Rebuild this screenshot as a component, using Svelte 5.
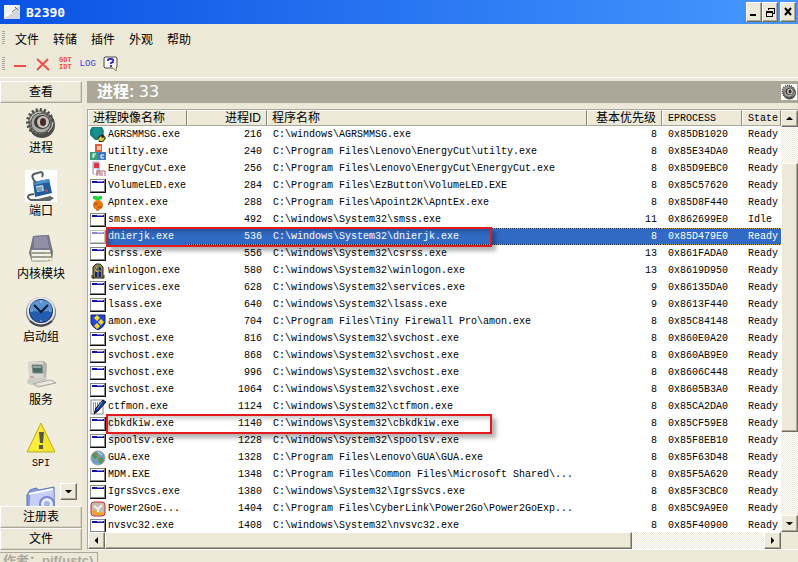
<script>
	const menus = ['文件', '转储', '插件', '外观', '帮助']

	const sideitems = [
		{ icon: 'gear', label: '进程' },
		{ icon: 'port', label: '端口' },
		{ icon: 'kernel', label: '内核模块' },
		{ icon: 'clock', label: '启动组' },
		{ icon: 'pc', label: '服务' },
		{ icon: 'warn', label: 'SPI' },
		{ icon: 'folder', label: '' }
	]

	// icon, name, pid, path, priority, eprocess, state
	const processes = [
		['phone', 'AGRSMMSG.exe', 216, 'C:\\windows\\AGRSMMSG.exe', 8, '0x85DB1020', 'Ready'],
		['blocks', 'utilty.exe', 240, 'C:\\Program Files\\Lenovo\\EnergyCut\\utilty.exe', 8, '0x85E34DA0', 'Ready'],
		['energy', 'EnergyCut.exe', 256, 'C:\\Program Files\\Lenovo\\EnergyCut\\EnergyCut.exe', 8, '0x85D9EBC0', 'Ready'],
		['win', 'VolumeLED.exe', 284, 'C:\\Program Files\\EzButton\\VolumeLED.EXE', 8, '0x85C57620', 'Ready'],
		['carrot', 'Apntex.exe', 288, 'C:\\Program Files\\Apoint2K\\ApntEx.exe', 8, '0x85D8F440', 'Ready'],
		['win', 'smss.exe', 492, 'C:\\windows\\System32\\smss.exe', 11, '0x862699E0', 'Idle'],
		['win', 'dnierjk.exe', 536, 'C:\\windows\\System32\\dnierjk.exe', 8, '0x85D479E0', 'Ready'],
		['win', 'csrss.exe', 556, 'C:\\windows\\System32\\csrss.exe', 13, '0x861FADA0', 'Ready'],
		['logon', 'winlogon.exe', 580, 'C:\\windows\\System32\\winlogon.exe', 13, '0x8619D950', 'Ready'],
		['win', 'services.exe', 628, 'C:\\windows\\System32\\services.exe', 9, '0x86135DA0', 'Ready'],
		['win', 'lsass.exe', 640, 'C:\\windows\\System32\\lsass.exe', 9, '0x8613F440', 'Ready'],
		['shield', 'amon.exe', 704, 'C:\\Program Files\\Tiny Firewall Pro\\amon.exe', 8, '0x85C84148', 'Ready'],
		['win', 'svchost.exe', 816, 'C:\\windows\\System32\\svchost.exe', 8, '0x860E0A20', 'Ready'],
		['win', 'svchost.exe', 868, 'C:\\windows\\System32\\svchost.exe', 8, '0x860AB9E0', 'Ready'],
		['win', 'svchost.exe', 996, 'C:\\windows\\System32\\svchost.exe', 8, '0x8606C448', 'Ready'],
		['win', 'svchost.exe', 1064, 'C:\\windows\\System32\\svchost.exe', 8, '0x8605B3A0', 'Ready'],
		['pen', 'ctfmon.exe', 1124, 'C:\\windows\\System32\\ctfmon.exe', 8, '0x85CA2DA0', 'Ready'],
		['win', 'cbkdkiw.exe', 1140, 'C:\\windows\\System32\\cbkdkiw.exe', 8, '0x85CF59E8', 'Ready'],
		['win', 'spoolsv.exe', 1228, 'C:\\windows\\System32\\spoolsv.exe', 8, '0x85F8EB10', 'Ready'],
		['globe', 'GUA.exe', 1328, 'C:\\Program Files\\Lenovo\\GUA\\GUA.exe', 8, '0x85F63D48', 'Ready'],
		['win', 'MDM.EXE', 1348, 'C:\\Program Files\\Common Files\\Microsoft Shared\\...', 8, '0x85F5A620', 'Ready'],
		['win', 'IgrsSvcs.exe', 1380, 'C:\\windows\\System32\\IgrsSvcs.exe', 8, '0x85F3CBC0', 'Ready'],
		['power', 'Power2GoE...', 1404, 'C:\\Program Files\\CyberLink\\Power2Go\\Power2GoExp...', 8, '0x85C9A9E0', 'Ready'],
		['win', 'nvsvc32.exe', 1408, 'C:\\windows\\System32\\nvsvc32.exe', 8, '0x85F40900', 'Ready']
	]

	const marked = ['dnierjk.exe', 'cbkdkiw.exe']
	let selected = $state(536)
</script>

{#snippet gear()}
	<ellipse cx="17" cy="18" rx="13" ry="13" fill="#4c4c4a" />
	<ellipse cx="15" cy="15" rx="12" ry="12" fill="#85857f" stroke="#4d4d4b" stroke-width="4" stroke-dasharray="2 2" />
	<ellipse cx="16" cy="16" rx="10" ry="10" fill="#aaa9a4" stroke="#555552" />
	<ellipse cx="17" cy="15" rx="8" ry="7" fill="#393b39" />
	<ellipse cx="18" cy="15" rx="6" ry="6" fill="#c6c5c0" />
	<ellipse cx="18" cy="15" rx="3" ry="4" fill="#4b2c25" />
	<path d="M5 13Q8 5 16 5M23 25Q28 21 28 15" fill="none" stroke="#dedcd5" />
{/snippet}

{#snippet sideicon(name)}
	<svg width="32" height="32" viewBox="0 0 32 32" aria-hidden="true">
		{#if name == 'gear'}
			{@render gear()}
		{:else if name == 'port'}
			<rect width="32" height="32" fill="#fff" />
			<path d="M8 12L24 9L27 23L10 27Z" fill="#225d9b" />
			<path d="M8 12L24 9L25 12L9 15Z" fill="#4c91ca" />
			<path d="M11 16L18 15L19 21L12 22Z" fill="#b4d2df" />
			<path d="M12 18h5M12 20h5" stroke="#416a7d" />
			<rect x="20" y="19" width="3" height="3" fill="#c33b56" />
			<path d="M11 13Q5 6 9 4L16 2Q19 3 17 7M9 24L4 25Q1 28 6 30L16 30" fill="none" stroke="#53605e" stroke-width="2" />
			<path d="M13 29L25 26L29 28L25 31H14Z" fill="#5d686a" />
		{:else if name == 'kernel'}
			<path d="M8 3L24 2L28 19L27 28L7 29L4 20Z" fill="#777777" />
			<path d="M8 3L23 2L26 17L7 17Z" fill="#77778d" />
			<path d="M9 4L22 3L24 15L9 15Z" fill="#8f90a7" />
			<path d="M6 17H25L27 28L7 29Z" fill="#c9c8bc" />
			<path d="M7 18H25M7 22H26M7 26H27" stroke="#f5f3e8" stroke-width="2" />
			<path d="M7 20H25M7 24H26" stroke="#777770" />
			<path d="M21 20h2M22 24h2M23 27h2" stroke="#a6c54d" />
		{:else if name == 'clock'}
			<circle cx="16" cy="16" r="15" fill="#777c84" />
			<circle cx="16" cy="15" r="14" fill="#e5e7ea" />
			<circle cx="16" cy="15" r="12" fill="#183465" />
			<circle cx="16" cy="15" r="11" fill="#245cae" />
			<path d="M5 14Q5 4 16 4Q27 4 27 14Q16 17 5 14" fill="#5d93cf" />
			<path d="M16 4v3M16 24v2M5 15h3M24 15h3" stroke="#aecdf0" />
			<path d="M9 9L16 16L23 9" fill="none" stroke="#0b1c3c" stroke-width="2" />
			<path d="M5 25Q16 34 27 25" fill="none" stroke="#42464d" stroke-width="2" />
		{:else if name == 'pc'}
			<path d="M3 3L19 2L22 5L21 20L5 21Z" fill="#b3b2aa" />
			<path d="M3 3L18 3L19 19L4 20Z" fill="#d9d8d0" />
			<path d="M7 6H17L18 14H8Z" fill="#456f67" stroke="#828981" />
			<path d="M8 7H16V9H8Z" fill="#8aaa9f" />
			<path d="M3 20L21 18L23 23L6 26L2 24Z" fill="#cdccc4" />
			<path d="M8 25L26 21L31 24L13 28Z" fill="#d5d4ca" stroke="#a9a9a1" />
			<path d="M12 25L26 22M14 26L28 23" stroke="#f3f1e8" />
			<path d="M5 18h4" stroke="#cb796c" />
		{:else if name == 'warn'}
			<path d="M16 1L30 30H2Z" fill="#f3e52a" stroke="#bcae2b" stroke-linejoin="round" />
			<path d="M16 3L16 28H4Z" fill="#fbf348" opacity="0.6" />
			<path d="M14 10H19L18 21H15Z" fill="#5a5545" />
			<rect x="14" y="23" width="4" height="4" fill="#5a5545" />
		{:else}
			<path d="M2 10L5 5L11 3L14 5L29 2L29 32H2Z" fill="#829ae0" stroke="#5b74b5" />
			<path d="M5 9L29 4L29 32H3Z" fill="#c7cff8" stroke="#8094db" />
			<path d="M4 9L28 4" stroke="#fff" stroke-width="2" />
			<circle cx="22" cy="19" r="7" fill="#e9edff" stroke="#7387d4" stroke-width="2" />
			<circle cx="22" cy="19" r="3" fill="#a2b3ef" />
		{/if}
	</svg>
{/snippet}

{#snippet proc(name)}
	<svg width="16" height="16" viewBox="0 0 16 16" aria-hidden="true">
		{#if name == 'win'}
			<rect y="1" width="16" height="14" fill="#111" />
			<rect y="1" width="15" height="13" fill="#888" />
			<rect x="1" y="2" width="13" height="11" fill="#fff" />
			<rect x="2" y="3" width="12" height="2" fill="#1010a8" />
			<path d="M8 3v1M10 3v1M12 3v1" stroke="#fff" />
		{:else if name == 'phone'}
			<path d="M2 0H12L14 4L13 9L9 13H5L0 8V3Z" fill="#167d80" />
			<path d="M4 1H10L12 5L9 10H5L2 6Z" fill="#198f8f" />
			<path d="M8 10L13 7L16 11L13 15H9Z" fill="#222" />
			<path d="M8 12L11 9L12 11L15 10L13 14H10Z" fill="#d9ce35" />
		{:else if name == 'blocks'}
			<rect x="5" y="0" width="7" height="8" fill="#dd6135" />
			<rect x="7" y="2" width="4" height="4" fill="#f7c6a5" />
			<rect x="0" y="8" width="8" height="8" fill="#3b9b76" />
			<rect x="8" y="8" width="8" height="8" fill="#4077bd" />
			<path d="M3 14V10H6M3 12H5M14 11H11V14H14" fill="none" stroke="#fff" />
		{:else if name == 'energy'}
			<path d="M3 1H9V13H3Z" fill="#d3dae3" stroke="#a0a5b1" />
			<rect x="4" y="2" width="5" height="5" fill="#df3548" />
			<path d="M7 15V10H15V15M10 15V11M12 15V11" fill="none" stroke="#ba596a" />
			<path d="M5 8v5" stroke="#fff" stroke-width="2" />
		{:else if name == 'carrot'}
			<path d="M3 1H7L8 2L9 1H12V4L9 5H6L3 4Z" fill="#1fd836" />
			<ellipse cx="8" cy="10" rx="5" ry="5" fill="#e77717" />
			<path d="M4 9H8M8 12H12M6 15H9" stroke="#a3480b" />
		{:else if name == 'logon'}
			<path d="M3 15V4L6 1H10L13 4V15Z" fill="#8e8a45" stroke="#29290d" />
			<path d="M5 14V5L8 3L11 5V14Z" fill="#182078" />
			<path d="M8 3V14M5 8H11" stroke="#aaa653" />
			<path d="M2 12V15H4M14 12V15H12" fill="none" stroke="#222" />
			<path d="M7 4Q4 7 7 9" fill="none" stroke="#e1da74" />
		{:else if name == 'shield'}
			<path d="M1 1H15V9Q14 13 8 16Q2 13 1 9Z" fill="#2246d8" stroke="#101e60" />
			<path d="M7 1L10 4L7 7L4 4ZM11 5L14 8L11 11L8 8ZM7 9L10 12L7 15L4 12Z" fill="#f7db22" />
		{:else if name == 'pen'}
			<rect x="1" y="1" width="12" height="14" fill="#fff" stroke="#888" />
			<path d="M3 4H11M3 6H10M3 8H8M3 10H7M3 12H5" stroke="#222" stroke-dasharray="1 1" />
			<path d="M13 1L16 3L8 12L4 15L6 9Z" fill="#1438a4" stroke="#111" />
			<path d="M12 3L7 10" stroke="#67a2f2" />
		{:else if name == 'globe'}
			<circle cx="8" cy="8" r="7" fill="#719fbd" stroke="#95a2a5" />
			<path d="M2 4L6 2L8 6L5 9L3 7ZM8 8L12 7L14 10L11 14L9 12Z" fill="#48974f" />
			<path d="M4 3L13 12" stroke="#cf754a" />
			<path d="M8 2L12 5" stroke="#e9f1ee" />
		{:else}
			<rect x="1" y="1" width="14" height="14" rx="3" fill="#c3beb5" stroke="#ce2526" />
			<path d="M2 10Q6 7 8 12L13 11V14H3Z" fill="#f4a425" />
			<path d="M4 5L8 8L12 4M8 7V11" fill="none" stroke="#f3f1ea" stroke-width="2" />
		{/if}
	</svg>
{/snippet}

{#snippet arrow(dir)}
	<svg width="7" height="7" viewBox="0 0 7 7" aria-hidden="true">
		{#if dir == 'up'}<path d="M0 5h7L4 2H3z" />
		{:else if dir == 'down'}<path d="M0 2h7L4 5H3z" />
		{:else if dir == 'left'}<path d="M5 0v7L2 4V3z" />
		{:else}<path d="M2 0v7L5 4V3z" />{/if}
	</svg>
{/snippet}

<div class="window">
	<header class="titlebar">
		<svg width="16" height="14" viewBox="0 0 16 14" aria-hidden="true">
			<rect width="16" height="14" fill="#f0f1f2" />
			<path d="M0 14L16 0V14Z" fill="#d3d6da" />
			<path d="M2 11L12 4" stroke="#fff" stroke-width="2" />
			<path d="M8 7L13 3M11 2l3 3" stroke="#62676d" />
		</svg>
		<h1>B2390</h1>
		<div class="winbuttons">
			<button class="raised" aria-label="Minimize"><svg width="10" height="10" viewBox="0 0 10 10"><path d="M1 8h6" stroke="#000" stroke-width="2" /></svg></button>
			<button class="raised" aria-label="Restore"><svg width="10" height="10" viewBox="0 0 10 10" shape-rendering="crispEdges"><path d="M3 3V1H9V6H7M3 1H9M1 4H7V9H1ZM1 5H7" fill="none" stroke="#000" /></svg></button>
			<button class="raised close" aria-label="Close"><svg width="10" height="10" viewBox="0 0 10 10"><path d="M2 1L8 8M8 1L2 8" stroke="#000" stroke-width="2" /></svg></button>
		</div>
	</header>

	<nav class="menubar">
		<span class="grip"></span>
		{#each menus as m}
			<button>{m}</button>
		{/each}
	</nav>
	<div class="toolbar">
		<span class="grip"></span>
		<button aria-label="Remove"><svg width="16" height="16" viewBox="0 0 16 16"><path d="M2 10H14" stroke="#f34c42" stroke-width="2" /></svg></button>
		<button aria-label="Delete"><svg width="16" height="16" viewBox="0 0 16 16"><path d="M2 3L14 14M13 3L2 14" stroke="#f34c42" stroke-width="2" /></svg></button>
		<button class="gdt">GDT<br />IDT</button>
		<button class="log">LOG</button>
		<button aria-label="Help">
			<svg width="16" height="16" viewBox="0 0 16 16">
				<path d="M2 1H13L14 2V11L13 12V15L10 12H2L1 11V2Z" fill="#f7f6f0" stroke="#48484a" />
				<path d="M10 12H13V15Z" fill="#efe54a" />
				<path d="M5 5V4L6 3H9L10 4V6L8 7V8M8 9V11" fill="none" stroke="#3d36b5" stroke-width="2" />
			</svg>
		</button>
	</div>

	<main>
		<aside>
			<button class="group">查看</button>
			<div class="items">
				{#each sideitems as s}
					<button class="item" aria-label={s.label || 'More'}>
						{@render sideicon(s.icon)}
						<span class:latin={s.label == 'SPI'}>{s.label}</span>
					</button>
				{/each}
				<button class="raised more" aria-label="Scroll down">{@render arrow('down')}</button>
			</div>
			<button class="group">注册表</button>
			<button class="group">文件</button>
		</aside>

		<section>
			<div class="band">
				<h2>进程: <span>33</span></h2>
				<svg width="16" height="16" viewBox="0 0 32 32" aria-hidden="true">
					<rect width="32" height="32" fill="#fff" />
					{@render gear()}
				</svg>
			</div>
			<div class="list">
				<div class="rows">
					<table>
						<colgroup>
							<col class="c-name" /><col class="c-pid" /><col /><col class="c-prio" /><col class="c-ep" /><col class="c-state" />
						</colgroup>
						<thead>
							<tr>
								<th>进程映像名称</th>
								<th class="num">进程ID</th>
								<th>程序名称</th>
								<th class="num">基本优先级</th>
								<th class="latin">EPROCESS</th>
								<th class="latin">State</th>
							</tr>
						</thead>
						<tbody>
							{#each processes as [icon, name, pid, path, prio, ep, state]}
								<tr class:selected={pid == selected} onclick={() => (selected = pid)}>
									<td class="name">
										<div>{@render proc(icon)}<span>{name}</span></div>
										{#if marked.includes(name)}<i class="mark"></i>{/if}
									</td>
									<td class="num">{pid}</td>
									<td>{path}</td>
									<td class="num">{prio}</td>
									<td>{ep}</td>
									<td>{state}</td>
								</tr>
							{/each}
						</tbody>
					</table>
				</div>
				<div class="vscroll">
					<button class="raised" aria-label="Up">{@render arrow('up')}</button>
					<div class="track">
						<div class="raised thumb"></div>
					</div>
					<button class="raised" aria-label="Down">{@render arrow('down')}</button>
				</div>
				<div class="hscroll">
					<button class="raised" aria-label="Left">{@render arrow('left')}</button>
					<div class="track">
						<div class="raised thumb"></div>
					</div>
					<button class="raised" aria-label="Right">{@render arrow('right')}</button>
				</div>
			</div>
		</section>
	</main>

	<footer><span>作者：pjf(ustc)</span></footer>
</div>

<style>
	:global(body) {
		margin: 0;
		background: #ece9d8;
	}
	.window {
		height: 100vh;
		display: flex;
		flex-direction: column;
		overflow: hidden;
		background: #ece9d8;
		font-family: "Liberation Sans", "Noto Sans CJK SC", sans-serif;
		font-size: 12px;
		color: #000;
	}
	button {
		font: inherit;
		color: inherit;
		border: 0;
		padding: 0;
		background: none;
	}
	svg {
		display: block;
		flex: none;
	}
	.raised {
		box-sizing: border-box;
		display: flex;
		align-items: center;
		justify-content: center;
		background: #ece9d8;
		border: 1px solid;
		border-color: #fff #716f64 #716f64 #fff;
		box-shadow: inset -1px -1px #aca899;
	}

	.titlebar {
		flex: none;
		height: 24px;
		display: flex;
		align-items: center;
		gap: 6px;
		padding: 0 2px 0 4px;
		background: linear-gradient(90deg, #0a52e4, #4698ff);
	}
	h1 {
		margin: 0;
		flex: 1;
		font: bold 13px "DejaVu Sans Mono", monospace;
		color: #fff;
	}
	.winbuttons {
		display: flex;
	}
	.winbuttons button {
		width: 16px;
		height: 20px;
	}
	.winbuttons .close {
		margin-left: 2px;
	}

	.menubar,
	.toolbar {
		flex: none;
		display: flex;
		align-items: center;
		padding-left: 2px;
	}
	.menubar {
		height: 28px;
		gap: 14px;
	}
	.menubar .grip {
		margin-right: -4px;
	}
	.toolbar {
		height: 24px;
		gap: 7px;
		padding-bottom: 1px;
		border-bottom: 1px solid #fff;
	}
	.grip {
		width: 3px;
		height: 14px;
		background: repeating-linear-gradient(#aca899 0 1px, #ece9d8 1px 2px);
	}
	.gdt {
		padding: 0 1px;
		font: bold 7px/7px "Liberation Mono", monospace;
		color: #f34c42;
	}
	.log {
		font: 9px/10px "Liberation Mono", monospace;
		color: #3a35ee;
	}

	main {
		flex: 1;
		min-height: 0;
		display: grid;
		grid-template-columns: 82px 1fr;
		gap: 5px;
		padding-top: 3px;
	}
	aside {
		min-height: 0;
		display: flex;
		flex-direction: column;
		background: #f0eddd;
	}
	.group {
		flex: none;
		height: 22px;
		line-height: 18px;
		background: #ece9d8;
		border: 1px solid;
		border-color: #fff #aca899 #aca899 #fff;
		box-shadow: inset -1px -1px #d6d2c2;
	}
	.items {
		position: relative;
		flex: 1;
		min-height: 0;
		overflow: hidden;
		display: flex;
		flex-direction: column;
		gap: 15px;
		padding-top: 4px;
	}
	.item {
		flex: none;
		display: flex;
		flex-direction: column;
		align-items: center;
	}
	.item span {
		height: 16px;
		line-height: 18px;
	}
	.item .latin {
		font: 10px/20px "Liberation Mono", monospace;
	}
	.more {
		position: absolute;
		right: 5px;
		bottom: 6px;
		width: 17px;
		height: 17px;
	}

	section {
		min-width: 0;
		min-height: 0;
		display: flex;
		flex-direction: column;
		gap: 6px;
	}
	.band {
		flex: none;
		height: 22px;
		display: flex;
		align-items: center;
		justify-content: space-between;
		padding: 0 1px 0 10px;
		background: #aca899;
	}
	h2 {
		margin: 0;
		font-size: 16px;
		line-height: 22px;
		color: #fff;
	}
	h2 span {
		font-family: "DejaVu Sans", sans-serif;
		font-weight: normal;
	}
	.list {
		flex: 1;
		min-height: 0;
		display: grid;
		grid-template-columns: 1fr 17px;
		grid-template-rows: 1fr 17px;
		border-top: 1px solid #aca899;
		border-left: 1px solid #aca899;
		border-bottom: 1px solid #fff;
	}
	.rows {
		min-width: 0;
		min-height: 0;
		overflow: hidden;
		background: #fff;
	}
	table {
		width: 100%;
		table-layout: fixed;
		border-collapse: separate;
		border-spacing: 0;
		font: 10px/17px "Liberation Mono", "Noto Sans CJK SC", monospace;
	}
	.c-name {
		width: 99px;
	}
	.c-pid,
	.c-ep {
		width: 80px;
	}
	.c-prio {
		width: 75px;
	}
	.c-state {
		width: 39px;
	}
	th {
		height: 16px;
		box-sizing: border-box;
		padding: 0 4px;
		font: 12px/13px "Liberation Sans", "Noto Sans CJK SC", sans-serif;
		text-align: left;
		white-space: nowrap;
		overflow: hidden;
		background: #ece9d8;
		border: 1px solid;
		border-color: #fff #8a8775 #aca899 #fff;
	}
	th.latin {
		padding-left: 5px;
		font: 10px/13px "Liberation Mono", monospace;
	}
	td {
		height: 17px;
		padding: 0 0 0 6px;
		white-space: nowrap;
	}
	.num {
		padding-right: 5px;
		text-align: right;
	}
	td.name {
		position: relative;
		padding: 0 0 0 2px;
	}
	.name div {
		display: flex;
		align-items: center;
		gap: 2px;
		height: 17px;
	}
	.selected td {
		color: #fff;
		background-color: #316ac5;
		background-image: repeating-linear-gradient(90deg, #d6ae32 0 1px, #16243c 1px 2px), repeating-linear-gradient(90deg, #d6ae32 0 1px, #16243c 1px 2px);
		background-position: top, bottom;
		background-size: 100% 1px;
		background-repeat: no-repeat;
	}
	.selected td.name {
		background: linear-gradient(90deg, #fff 19px, #316ac5 19px);
	}
	.selected .name svg {
		opacity: 0.5;
	}
	/* red frame drawn over a suspicious process */
	.mark {
		position: absolute;
		z-index: 1;
		left: 18px;
		top: -1px;
		width: 382px;
		height: 16px;
		border: 2px solid #e3191b;
		box-shadow: 4px 4px 4px rgba(0, 0, 0, 0.3), inset 3px 3px 4px rgba(0, 0, 0, 0.2);
		pointer-events: none;
	}

	.vscroll,
	.hscroll {
		display: flex;
		min-height: 0;
	}
	.vscroll {
		flex-direction: column;
	}
	.hscroll button,
	.vscroll button {
		flex: none;
		width: 17px;
		height: 17px;
	}
	.track {
		flex: 1;
		min-height: 0;
		display: flex;
		background: repeating-conic-gradient(#fff 0 25%, #ece9d8 0 50%) 0 0 / 2px 2px;
	}
	.vscroll .track {
		flex-direction: column;
	}
	.vscroll .track::before {
		content: "";
		flex: 36;
	}
	.vscroll .track::after {
		content: "";
		flex: 84;
	}
	.vscroll .thumb {
		flex: 269;
	}
	.hscroll .thumb {
		width: 80%;
	}

	footer {
		flex: none;
		height: 12px;
		overflow: hidden;
		color: #aca899;
		font-size: 13px;
		font-weight: bold;
	}
	footer span {
		display: inline-block;
		margin-top: 2px;
		padding: 0 4px 0 3px;
		line-height: 16px;
		border: 1px solid #aca899;
		border-left: 0;
	}
</style>
